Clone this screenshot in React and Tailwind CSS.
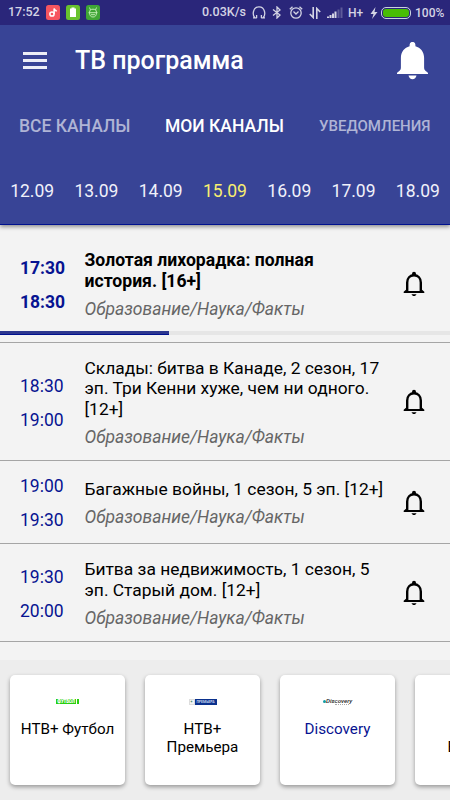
const days = ["12.09", "13.09", "14.09", "15.09", "16.09", "17.09", "18.09"];

const programs = [
  {
    start: "17:30",
    end: "18:30",
    title: "Золотая лихорадка: полная история. [16+]",
    current: true,
    progress: 37.5,
    height: "h-[118px]",
  },
  {
    start: "18:30",
    end: "19:00",
    title: "Склады: битва в Канаде, 2 сезон, 17 эп. Три Кенни хуже, чем ни одного. [12+]",
    height: "h-[118px]",
  },
  {
    start: "19:00",
    end: "19:30",
    title: "Багажные войны, 1 сезон, 5 эп. [12+]",
    height: "h-[83px]",
  },
  {
    start: "19:30",
    end: "20:00",
    title: "Битва за недвижимость, 1 сезон, 5 эп. Старый дом. [12+]",
    height: "h-[98px]",
  },
];

const BellOutline = () => (
  <svg className="w-[22px] h-[26px]" viewBox="0 0 22 26">
    <path d="M4.2 21v-9.500C4.200 7.200 7 4.300 11 4.300s6.800 2.900 6.800 7.200V21" fill="none" stroke="#000" strokeWidth="2.400" />
    <path d="M9 4.500V2.700a2 2 0 0 1 4 0v1.800z" />
    <path d="M3 18.800.7 20.800v1.300h20.600v-1.300L19 18.800v1.200H3z" />
    <path d="M8.500 23.300h5c-.5 1.200-1.300 1.800-2.500 1.800s-2-.6-2.500-1.800z" />
  </svg>
);

const BellSolid = () => (
  <svg className="w-[31px] h-[38px]" viewBox="0 0 31 38" fill="#fff">
    <path d="M12.600 4.200V2.800a2.900 2.900 0 0 1 5.800 0v1.400c5.200 1.300 8.700 5.800 8.700 11.500v9.800c0 1.800.7 2.800 1.900 3.800.9.700 2 1.300 2 1.900V32H0v-.8c0-.6 1.100-1.200 2-1.900 1.200-1 1.900-2 1.900-3.800v-9.800c0-5.700 3.500-10.200 8.700-11.500z" />
    <path d="M11.500 33.500h8c-.5 2.300-2 3.700-4 3.700s-3.500-1.400-4-3.700z" />
  </svg>
);

const StatusBar = () => (
  <div className="h-[25px] bg-[#2a267a] flex items-center justify-between pl-2 pr-2 text-[#d4d4e4] text-[12px] font-medium">
    <div className="flex items-center gap-[6px]">
      <span className="w-8 text-[12.500px]">17:52</span>
      <svg className="w-[14px] h-[15px]" viewBox="0 0 14 15">
        <rect width="14" height="15" rx="2.500" fill="#f6555f" />
        <circle cx="6" cy="9" r="2.100" fill="none" stroke="#fff" strokeWidth="1.500" />
        <path d="M8.100 9V3.500c.3 1.500 1.300 2.200 2.700 2.400" fill="none" stroke="#fff" strokeWidth="1.500" />
      </svg>
      <svg className="w-[14px] h-[15px]" viewBox="0 0 14 15">
        <rect width="14" height="15" rx="2.500" fill="#69c22e" />
        <path d="M5.500 2.500h3v1H10v8.500H4V3.500h1.500z" fill="#fff" />
      </svg>
      <svg className="w-[14px] h-[15px]" viewBox="0 0 14 15">
        <rect width="14" height="15" rx="2.500" fill="#3fa535" />
        <g fill="none" stroke="#c9f0bd" strokeWidth=".9">
          <path d="M3.500 7.500C3.500 5 5 4.200 7 4.200s3.500.8 3.500 3.300c0 3-1.200 4.500-3.500 4.500S3.500 10.500 3.500 7.500zM4.500 5 3.500 2.500M9.500 5l1-2.500M2.500 7.700h9M5 9.700h4" />
        </g>
      </svg>
    </div>
    <div className="flex items-center">
      <span className="w-[44px] mr-[6px] text-[12.500px]">0.03K/s</span>
      <svg className="w-[14px] h-[13px] mr-[6px]" viewBox="0 0 14 13" fill="none" stroke="currentColor" strokeWidth="1.300">
        <path d="M4.800 11.900H1M9.200 11.900H13M2.600 11.500C1 9.500 1 7.500 1.500 5.500 2.200 2.500 4.200.8 7 .8s4.800 1.700 5.500 4.700c.5 2 .5 4-1.100 6M4.600 9v3M9.400 9v3" />
      </svg>
      <svg className="w-[10px] h-[13px] mr-[7px]" viewBox="0 0 10 13" fill="none" stroke="currentColor" strokeWidth="1.300">
        <path d="m1 3.500 7 5.500-3 3V1l3 3-7 5.500" />
      </svg>
      <svg className="w-[14px] h-[13px] mr-[6px]" viewBox="0 0 14 13" fill="none" stroke="currentColor" strokeWidth="1.300">
        <circle cx="7" cy="7" r="5.200" />
        <path d="M4.500 5.500 7 8l2.500-2.500M.8 3.300 3.500.8M13.200 3.300 10.500.8" />
      </svg>
      <svg className="w-[12px] h-[12px] mr-[6px]" viewBox="0 0 12 12" fill="none" stroke="currentColor" strokeWidth="1.600">
        <path d="M4.200 0v10.500L.8 7M7.800 12V1.500L11.200 5" />
      </svg>
      <svg className="w-[16px] h-[11px] mr-[5px]" viewBox="0 0 16 11" fill="currentColor">
        <path d="M0 9.500h2V11H0zM2.500 8h2v3h-2zM5 6.500h2V11H5zM7.500 4.500h2V11h-2z" />
        <path d="M10.500 2.500h2V11h-2zM13.500.5h2V11h-2z" opacity=".3" />
      </svg>
      <span className="w-[16px] mr-[6px]">H+</span>
      <svg className="w-[8px] h-[12px] mr-[3px]" viewBox="0 0 8 12" fill="currentColor">
        <path d="M5.500 0 .5 7h3L2 12l5.500-7h-3z" />
      </svg>
      <div className="w-[30px] h-[12px] rounded-[5px] border border-[#c9d2df] p-px mr-[4px]">
        <div className="h-full rounded-[3px] bg-[#48bd05]" />
      </div>
      <span className="w-[27px] whitespace-nowrap">100%</span>
    </div>
  </div>
);

const Header = () => (
  <header className="relative h-[225px] bg-[#384496] border-b border-[#00118f] shadow-[0_2px_4px_rgba(0,0,0,0.4)] text-white">
    <StatusBar />
    <div className="h-[70px] flex items-center pl-[23px] pr-[22px] pt-px">
      <div className="w-6 h-[17px] flex flex-col justify-between">
        <span className="h-[3px] bg-[#eceef7]" />
        <span className="h-[3px] bg-[#eceef7]" />
        <span className="h-[3px] bg-[#eceef7]" />
      </div>
      <h1 className="ml-7 flex-1 text-[25px] font-medium pt-px">ТВ программа</h1>
      <BellSolid />
    </div>
    <nav className="h-[62px] pt-px flex items-center font-medium pl-[19px] pr-[19px] justify-between whitespace-nowrap">
      <span className="w-[112px] text-[17.500px] text-[#afb4d5]">ВСЕ КАНАЛЫ</span>
      <span className="w-[120px] text-[17.500px]">МОИ КАНАЛЫ</span>
      <span className="w-[112px] text-[15px] text-[#afb4d5]">УВЕДОМЛЕНИЯ</span>
    </nav>
    <div className="h-[68px] grid grid-cols-7 items-center text-center text-[17.500px]">
      {days.map((day) => (
        <span key={day} className={day === "15.09" ? "text-[#f8ef70]" : "text-[#f0f1fa]"}>
          {day}
        </span>
      ))}
    </div>
  </header>
);

const ProgramRow = ({ item }) => (
  <article className={`${item.height} flex flex-col border-b border-[#a5a5a5]`}>
    <div className={`flex-1 flex items-center ${item.current ? "pt-[12px]" : "pt-px"}`}>
      <div className={`w-[84px] pl-5 pt-px flex flex-col gap-[14px] text-[17.500px] leading-[20px] text-[#071391] ${item.current ? "font-bold" : ""}`}>
        <span>{item.start}</span>
        <span>{item.end}</span>
      </div>
      <div className="w-[304px] pl-[0.5px] pt-px text-black">
        <h2 className={`leading-[20.5px] ${item.current ? "w-[260px] text-[17.600px] font-bold" : "text-[17.400px]"}`}>
          {item.title}
        </h2>
        <p className="mt-[8px] text-[17.500px] leading-[20px] italic text-[#666]">Образование/Наука/Факты</p>
      </div>
      <div className="ml-[15px]">
        <BellOutline />
      </div>
    </div>
    {item.current && (
      <div className="h-1 mb-[7px] bg-[#e6e6e6]">
        <div className="h-full bg-[#2c378f] border-b border-[#00118f]" style={{ width: `${item.progress}%` }} />
      </div>
    )}
  </article>
);

const FootballLogo = () => (
  <div className="w-[23px] h-[5px] flex gap-px text-[4.500px] leading-[5px] font-black text-white">
    <span className="w-5 bg-[#27cf10] text-center tracking-[-0.2px]">ФУТБОЛ</span>
    <span className="w-[2px] bg-[#27cf10]" />
  </div>
);

const PremiereLogo = () => (
  <div className="w-[28px] h-[6px] flex text-[3.500px] leading-[6px] font-bold">
    <span className="w-[6px] bg-[#f4f4f4] border border-[#ddd] leading-[4px] text-center text-[#26794b]">+</span>
    <span className="w-[22px] bg-[#0b318d] text-center text-[#c9d3ee]">ПРЕМЬЕРА</span>
  </div>
);

const DiscoveryLogo = () => (
  <div className="w-[29px]">
    <div className="h-[5px] flex items-center text-[6.200px] leading-[5px] italic font-medium text-[#222]">
      <span className="w-[3px] h-[3px] shrink-0 rounded-full bg-[#109ba8]" />
      <span>Discovery</span>
    </div>
    <div className="ml-[12px] w-[14px] border-b border-dotted border-[#aaa]" />
  </div>
);

const channels = [
  { name: "НТВ+ Футбол", logo: <FootballLogo /> },
  { name: "НТВ+ Премьера", logo: <PremiereLogo /> },
  { name: "Discovery", logo: <DiscoveryLogo />, active: true },
  { name: "Viasat Explore", logo: null, narrow: true },
];

const ChannelCard = ({ channel }) => (
  <div className="w-[115px] h-[110px] shrink-0 rounded-[5px] bg-white shadow-[0_2px_4px_rgba(0,0,0,0.36)] flex flex-col items-center pt-[24px]">
    <div className="h-[6px]">{channel.logo}</div>
    <p
      className={`mt-[15px] text-center text-[15.200px] leading-[18px] ${channel.narrow ? "w-[60px]" : "w-[100px]"} ${
        channel.active ? "text-[#071391]" : "text-black"
      }`}
    >
      {channel.name}
    </p>
  </div>
);

const App = () => {
  return (
    <div className="w-[450px] h-[800px] overflow-hidden flex flex-col bg-[#f3f3f3] font-['Roboto',sans-serif]">
      <Header />
      <main className="h-[435px]">
        {programs.map((item) => (
          <ProgramRow key={item.start} item={item} />
        ))}
      </main>
      <footer className="h-[140px] flex gap-5 bg-[#ededed] pl-[10px] pt-[15px] overflow-hidden">
        {channels.map((channel) => (
          <ChannelCard key={channel.name} channel={channel} />
        ))}
      </footer>
    </div>
  );
};

export default App;
